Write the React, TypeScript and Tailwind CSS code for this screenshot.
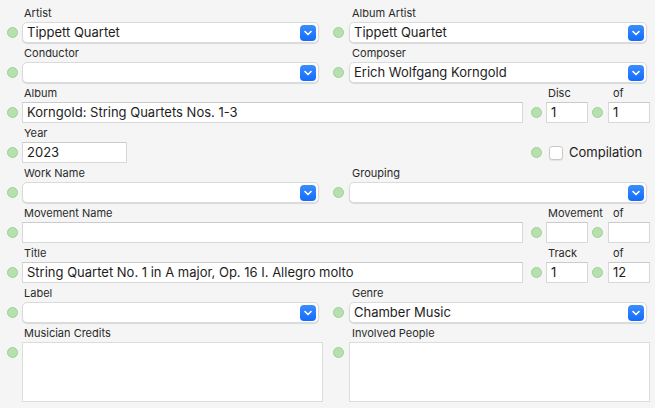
import React from 'react';

const FONT = "font-['Inter','Liberation_Sans',sans-serif]";

function Dot({ className = '' }: { className?: string }) {
  return (
    <span
      className={`block w-[11px] h-[11px] rounded-full bg-[#b6e0ae] border border-[#9dd294] shrink-0 ${className}`}
    />
  );
}

function Chevron() {
  return (
    <svg width="8" height="6" viewBox="0 0 8 6" fill="none">
      <path d="M1 1.5 L4 4.5 L7 1.5" stroke="white" strokeWidth="1.6" strokeLinecap="round" strokeLinejoin="round" />
    </svg>
  );
}

function Combo({ value = '', width }: { value?: string; width: string }) {
  return (
    <div
      className={`${width} h-[21px] shrink-0 flex items-center justify-between rounded-[5px] bg-white border border-[#dadada] shadow-[0_1px_1px_rgba(0,0,0,0.12)] pl-[4px] pr-[2px]`}
    >
      <span className="text-[13px] text-[#1d1d1d] truncate">{value}</span>
      <span className="w-[16px] h-[16px] rounded-[4px] bg-gradient-to-b from-[#3b8cfd] to-[#0f6cfd] flex items-center justify-center shrink-0">
        <Chevron />
      </span>
    </div>
  );
}

function Field({ value = '', width }: { value?: string; width: string }) {
  return (
    <div
      className={`${width} h-[21px] shrink-0 flex items-center bg-white border border-[#d8d8d8] border-t-[#cbcbcb] pl-[4px]`}
    >
      <span className="text-[13px] text-[#1d1d1d] truncate">{value}</span>
    </div>
  );
}

function Label({ children, className = '' }: { children?: React.ReactNode; className?: string }) {
  return <div className={`text-[11px] text-[#2a2a2a] leading-[17px] ${className}`}>{children}</div>;
}

function ComboRow({
  left,
  right,
  leftValue,
  rightValue,
}: {
  left: string;
  right: string;
  leftValue?: string;
  rightValue?: string;
}) {
  return (
    <div className="mb-[2px]">
      <div className="flex h-[17px]">
        <Label className="w-[328px] pl-[24px]">{left}</Label>
        <Label className="pl-[24px]">{right}</Label>
      </div>
      <div className="flex items-center h-[21px] pl-[7px]">
        <div className="flex items-center gap-[4px]">
          <Dot />
          <Combo value={leftValue} width="w-[297px]" />
        </div>
        <div className="flex items-center gap-[5px] ml-[14px]">
          <Dot />
          <Combo value={rightValue} width="w-[298px]" />
        </div>
      </div>
    </div>
  );
}

function NumberRow({
  label,
  numLabel,
  value,
  num,
  total,
}: {
  label: string;
  numLabel: string;
  value?: string;
  num?: string;
  total?: string;
}) {
  return (
    <div className="mb-[2px]">
      <div className="flex h-[17px]">
        <Label className="w-[548px] pl-[24px]">{label}</Label>
        <Label className="w-[65px]">{numLabel}</Label>
        <Label>of</Label>
      </div>
      <div className="flex items-center h-[21px] pl-[7px]">
        <div className="flex items-center gap-[4px]">
          <Dot />
          <Field value={value} width="w-[501px]" />
        </div>
        <div className="flex items-center gap-[4px] ml-[8px]">
          <Dot />
          <Field value={num} width="w-[42px]" />
        </div>
        <div className="flex items-center gap-[5px] ml-[4px]">
          <Dot />
          <Field value={total} width="w-[42px]" />
        </div>
      </div>
    </div>
  );
}

export default function App() {
  return (
    <div className={`w-[655px] h-[408px] bg-[#f5f5f5] pt-[5px] overflow-hidden ${FONT}`}>
      <ComboRow left="Artist" right="Album Artist" leftValue="Tippett Quartet" rightValue="Tippett Quartet" />
      <ComboRow left="Conductor" right="Composer" rightValue="Erich Wolfgang Korngold" />
      <NumberRow label="Album" numLabel="Disc" value="Korngold: String Quartets Nos. 1-3" num="1" total="1" />

      {/* Year + Compilation */}
      <div className="mb-[2px]">
        <div className="flex h-[17px]">
          <Label className="pl-[24px]">Year</Label>
        </div>
        <div className="flex items-center h-[21px] pl-[7px]">
          <div className="flex items-center gap-[4px]">
            <Dot />
            <Field value="2023" width="w-[105px]" />
          </div>
          <div className="flex items-center ml-[404px]">
            <Dot />
            <span className="block w-[14px] h-[14px] ml-[7px] rounded-[3px] bg-white border border-[#c9c9c9] shadow-[0_1px_1px_rgba(0,0,0,0.08)]" />
            <span className="ml-[6px] text-[13px] text-[#1d1d1d]">Compilation</span>
          </div>
        </div>
      </div>

      <ComboRow left="Work Name" right="Grouping" />
      <NumberRow label="Movement Name" numLabel="Movement" />
      <NumberRow
        label="Title"
        numLabel="Track"
        value="String Quartet No. 1 in A major, Op. 16 I. Allegro molto"
        num="1"
        total="12"
      />
      <ComboRow left="Label" right="Genre" rightValue="Chamber Music" />

      {/* Credits */}
      <div>
        <div className="flex h-[17px]">
          <Label className="w-[328px] pl-[24px]">Musician Credits</Label>
          <Label className="pl-[24px]">Involved People</Label>
        </div>
        <div className="flex items-start pl-[7px]">
          <div className="flex items-start gap-[4px]">
            <Dot className="mt-[5px]" />
            <div className="w-[301px] h-[60px] bg-white border border-[#dcdcdc]" />
          </div>
          <div className="flex items-start gap-[5px] ml-[10px]">
            <Dot className="mt-[5px]" />
            <div className="w-[301px] h-[60px] bg-white border border-[#dcdcdc]" />
          </div>
        </div>
      </div>
    </div>
  );
}
